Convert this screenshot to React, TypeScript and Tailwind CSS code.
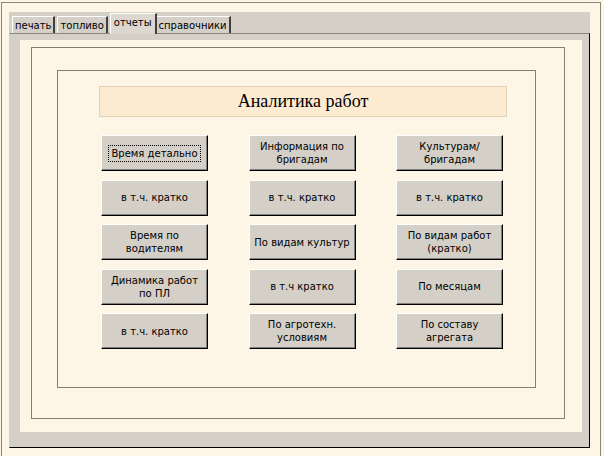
const rows: string[][] = [
  ["Время детально", "Информация по бригадам", "Культурам/ бригадам"],
  ["в т.ч. кратко", "в т.ч. кратко", "в т.ч. кратко"],
  ["Время по водителям", "По видам культур", "По видам работ (кратко)"],
  ["Динамика работ по ПЛ", "в т.ч кратко", "По месяцам"],
  ["в т.ч. кратко", "По агротехн. условиям", "По составу агрегата"],
];

const tabs = ["печать", "топливо", "отчеты", "справочники"];

function Tab({ label, active }: { label: string; active?: boolean }) {
  if (active) {
    return (
      <div className="relative z-10 -mr-[1px] -mb-[1px] h-[21px] px-[3px] pt-[3px] bg-[#dcd8d0] border-t border-l border-white border-r-2 border-r-[#404040] text-[10px] leading-[12px]">
        {label}
      </div>
    );
  }
  return (
    <div className="h-[17px] mr-[2px] px-[2px] pt-[3px] bg-[#d4d0c8] border-t border-l border-white border-r-2 border-r-[#404040] text-[10px] leading-[12px]">
      {label}
    </div>
  );
}

function Btn({ label, focused }: { label: string; focused?: boolean }) {
  return (
    <button className="flex h-[36px] items-center justify-center px-[2px] bg-[#d4d0c8] border border-t-white border-l-white border-r-black border-b-black shadow-[inset_-1px_-1px_0_#808080] text-center text-[10px] leading-[13px] text-black">
      <span className={focused ? "outline outline-1 outline-dotted outline-black outline-offset-1 px-[1px]" : ""}>
        {label}
      </span>
    </button>
  );
}

export default function App() {
  return (
    <div className="w-[604px] h-[456px] overflow-hidden bg-[#fdf6e6] pt-[2px] pl-[1px] pr-[3px] font-['DejaVu_Sans',sans-serif] text-black">
      <div className="h-[460px] border-t border-l border-r border-[#8c877c] pt-[9px] pl-[7px] pr-[7px]">
        <div className="flex flex-col w-[581px] h-[436px] bg-[#d4d0c8]">
          <div className="flex items-end h-[21px] pl-[3px]">
            {tabs.map((t) => (
              <Tab key={t} label={t} active={t === "отчеты"} />
            ))}
          </div>
          <div className="flex-1 border-t border-t-[#8a8780] border-l border-l-[#d4d0c8] border-r border-r-black border-b border-b-black pt-[6px] pl-[10px] pr-[7px] pb-[15px]">
            <div className="h-full bg-[#fdf6e6] pt-[7px] pl-[11px] pr-[17px]">
              <div className="h-[372px] border border-[#857f73] pt-[22px] pl-[25px] pr-[28px]">
                <div className="h-[318px] border border-[#857f73] pt-[15px] pl-[41px]">
                  <div className="w-[408px] h-[31px] flex items-center justify-center bg-[#fdebd1] border border-[#e4d3b3] font-['Liberation_Serif',serif] text-[18px]">
                    Аналитика работ
                  </div>
                  <div className="grid grid-cols-[107px_107px_107px] gap-x-[40.5px] gap-y-[8.5px] mt-[18px] ml-[2px]">
                    {rows.flat().map((l, i) => (
                      <Btn key={i} label={l} focused={i === 0} />
                    ))}
                  </div>
                </div>
              </div>
            </div>
          </div>
        </div>
      </div>
    </div>
  );
}
